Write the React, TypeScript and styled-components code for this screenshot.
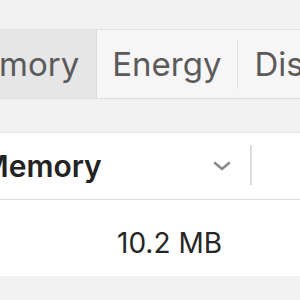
import styled, { createGlobalStyle } from 'styled-components'

const GlobalStyle = createGlobalStyle`
  html, body {
    margin: 0;
    padding: 0;
    background: #f3f2f3;
  }
  body {
    font-family: Inter, "Liberation Sans", sans-serif;
  }
`

const tabs = ['Memory', 'Energy', 'Disk', 'Network']

export default function App() {
  return (
    <Window>
      <GlobalStyle />
      <TabBar>
        {tabs.map((t, i) => (
          <Tab key={t} $selected={i === 0} $divider={i > 0 && i < tabs.length - 1}>
            {t}
          </Tab>
        ))}
      </TabBar>
      <Table>
        <HeaderRow>
          <HeaderCell $divider>
            <HeaderLabel>Memory</HeaderLabel>
            <Chevron viewBox="0 0 18 10">
              <polyline points="2,2 9,8 16,2" />
            </Chevron>
          </HeaderCell>
          <HeaderCell />
        </HeaderRow>
        <Row>
          <ValueCell>10.2 MB</ValueCell>
        </Row>
      </Table>
    </Window>
  )
}

const Window = styled.div`
  width: 300px;
  height: 300px;
  overflow: hidden;
  padding-top: 29px;
  box-sizing: border-box;
`

const TabBar = styled.div`
  display: flex;
  height: 70px;
  margin-left: -65px;
  background: #f7f6f7;
  border-top: 1px solid #e3e2e3;
  border-bottom: 1px solid #dedddf;
  box-sizing: border-box;
  width: max-content;
  min-width: 460px;
`

const Tab = styled.div<{ $selected?: boolean; $divider?: boolean }>`
  position: relative;
  display: flex;
  align-items: center;
  flex-shrink: 0;
  padding: 0 17px 0 15px;
  font-size: 33px;
  color: #5b5a5b;
  background: ${(p) => (p.$selected ? '#e7e6e7' : 'transparent')};
  border-right: 1px solid ${(p) => (p.$selected ? '#dcdbdc' : 'transparent')};

  &::after {
    content: '';
    display: ${(p) => (p.$divider ? 'block' : 'none')};
    position: absolute;
    right: 0;
    top: 10px;
    bottom: 9px;
    width: 1px;
    background: #dedddf;
  }
`

const Table = styled.div`
  margin-top: 33px;
  background: #ffffff;
  border-top: 1px solid #e6e6e6;
`

const HeaderRow = styled.div`
  display: flex;
  height: 67px;
  border-bottom: 1px solid #dedede;
  box-sizing: border-box;
`

const HeaderCell = styled.div<{ $divider?: boolean }>`
  display: flex;
  align-items: center;
  flex-shrink: 0;
  width: 252px;
  padding-right: 21px;
  box-sizing: border-box;
  position: relative;

  &::after {
    content: '';
    display: ${(p) => (p.$divider ? 'block' : 'none')};
    position: absolute;
    right: 0;
    top: 12px;
    bottom: 14px;
    width: 2px;
    background: #dcdcdc;
  }
`

const HeaderLabel = styled.span`
  flex: 1;
  margin-left: -19px;
  font-size: 30px;
  font-weight: 600;
  color: #232323;
`

const Chevron = styled.svg`
  width: 18px;
  height: 10px;
  fill: none;
  stroke: #8b8b8b;
  stroke-width: 2.6;
  stroke-linecap: round;
  stroke-linejoin: round;
`

const Row = styled.div`
  display: flex;
  height: 76px;
  padding-top: 10px;
  box-sizing: border-box;
  align-items: center;
`

const ValueCell = styled.div`
  width: 222px;
  text-align: right;
  font-size: 28px;
  color: #262626;
`
